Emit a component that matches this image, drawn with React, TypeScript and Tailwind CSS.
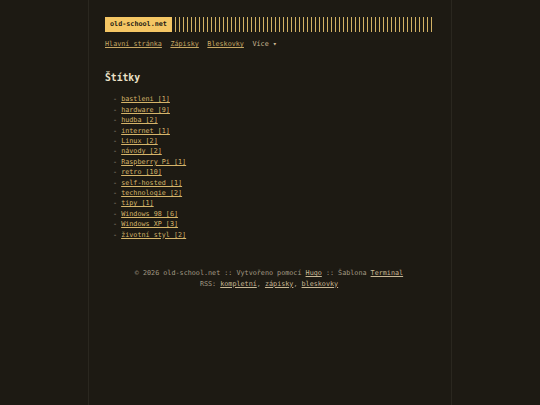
import React from "react";

const tags = [
  "bastleni [1]",
  "hardware [9]",
  "hudba [2]",
  "internet [1]",
  "Linux [2]",
  "návody [2]",
  "Raspberry Pi [1]",
  "retro [10]",
  "self-hosted [1]",
  "technologie [2]",
  "tipy [1]",
  "Windows 98 [6]",
  "Windows XP [3]",
  "životní styl [2]",
];

const mono = "font-['DejaVu_Sans_Mono','Liberation_Mono',monospace]";
const ul = "underline decoration-[0.6px] underline-offset-[1px]";

export default function App() {
  return (
    <div className={`min-h-[405px] bg-[#1d1a13] ${mono} text-[6.75px] leading-[10.4px] text-[#a89f8a]`}>
      <div className="mx-auto w-[364px] min-h-[405px] border-x border-[#2a271f] pl-[16px] pr-[18px] pt-[17px]">
        <header className="flex items-center">
          <div className="shrink-0 whitespace-nowrap h-[15px] px-[5px] flex items-center bg-[#f4c664] text-[#1d1a13] font-bold">
            old-school.net
          </div>
          <div className="ml-[2px] h-[15px] w-[261px] bg-[repeating-linear-gradient(90deg,transparent_0_1px,#d2b265_1px_2px,transparent_2px_4px)]" />
        </header>
        <nav className="mt-[7px] flex gap-[8.5px] items-center whitespace-nowrap">
          <a className={`text-[#c8a864] ${ul}`}>Hlavní stránka</a>
          <a className={`text-[#c8a864] ${ul}`}>Zápisky</a>
          <a className={`text-[#c8a864] ${ul}`}>Bleskovky</a>
          <span className="text-[#cbb894]">Více ▾</span>
        </nav>
        <h1 className="mt-[22px] text-[9.7px] leading-[14px] font-bold text-[#ece2c9]">Štítky</h1>
        <ul className="mt-[9px] pl-[8px]">
          {tags.map((t) => (
            <li key={t} className="whitespace-pre">
              <span className="text-[#a89f8a]">- </span>
              <a className={`text-[#d6b56a] ${ul}`}>{t}</a>
            </li>
          ))}
        </ul>
        <footer className="mt-[28px] text-center text-[#a39a85]">
          <div>
            © 2026 old-school.net :: Vytvořeno pomocí{" "}
            <a className={`text-[#c8b794] ${ul}`}>Hugo</a> :: Šablona{" "}
            <a className={`text-[#c8b794] ${ul}`}>Terminal</a>
          </div>
          <div>
            RSS: <a className={`text-[#c8b794] ${ul}`}>kompletní</a>,{" "}
            <a className={`text-[#c8b794] ${ul}`}>zápisky</a>,{" "}
            <a className={`text-[#c8b794] ${ul}`}>bleskovky</a>
          </div>
        </footer>
      </div>
    </div>
  );
}
